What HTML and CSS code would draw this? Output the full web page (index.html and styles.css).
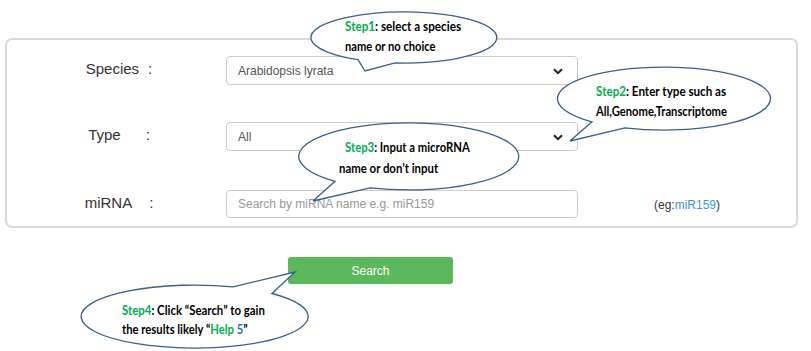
FILE: index.html
```html
<!DOCTYPE html>
<html>
<head>
<meta charset="utf-8">
<link rel="stylesheet" href="styles.css">
</head>
<body>
<div class="page">
  <div class="panel">
    <div class="row">
      <div class="label"><span>Species</span><span class="colon colon-sp">:</span></div>
      <div class="control select">
        <span class="value">Arabidopsis lyrata</span>
        <svg class="chev" width="10" height="7" viewBox="0 0 10 7"><path d="M1 1.2 L5 5.2 L9 1.2" fill="none" stroke="#222" stroke-width="2"/></svg>
      </div>
    </div>
    <div class="row row-type">
      <div class="label"><span>Type</span><span class="colon colon-ty">:</span></div>
      <div class="control select">
        <span class="value">All</span>
        <svg class="chev" width="10" height="7" viewBox="0 0 10 7"><path d="M1 1.2 L5 5.2 L9 1.2" fill="none" stroke="#222" stroke-width="2"/></svg>
      </div>
    </div>
    <div class="row row-mirna">
      <div class="label"><span>miRNA</span><span class="colon colon-mi">:</span></div>
      <div class="control input"><span class="placeholder">Search by miRNA name e.g. miR159</span></div>
      <div class="eg">(eg:<a class="eg-link">miR159</a>)</div>
    </div>
  </div>
  <div class="actions"><button class="search-btn">Search</button></div>

  <svg class="callouts" width="811" height="351" viewBox="0 0 811 351">
    <g class="bubble">
      <path d="M358 59.7 A93 25.5 0 1 1 395 62.9 L365 71 Z"/>
      <path d="M592 121.8 A106.5 31.5 0 1 1 625 127.9 L570 141 Z"/>
      <path d="M335 181.3 A110 33.5 0 1 1 370 187.8 L313 201 Z"/>
      <path d="M272 293.5 A113.5 31.5 0 1 1 233 286.9 L295 272 Z"/>
    </g>
    <g class="ctext">
      <text transform="translate(345 31) scale(0.899 1)"><tspan class="step">Step1</tspan>: select a species</text>
      <text transform="translate(345 51) scale(0.858 1)">name or no choice</text>
      <text transform="translate(596 96) scale(0.897 1)"><tspan class="step">Step2</tspan>: Enter type such as</text>
      <text transform="translate(596 116) scale(0.862 1)">All,Genome,Transcriptome</text>
      <text transform="translate(345 152) scale(0.871 1)"><tspan class="step">Step3</tspan>: Input a microRNA</text>
      <text transform="translate(339 173) scale(0.876 1)">name or don’t input</text>
      <text transform="translate(122 315) scale(0.879 1)"><tspan class="step">Step4</tspan>: Click “Search” to gain</text>
      <text transform="translate(122 334) scale(0.867 1)">the results likely “<tspan class="step">Help</tspan> <tspan class="num">5</tspan>”</text>
    </g>
  </svg>
</div>
</body>
</html>
```
FILE: styles.css
```css
* { box-sizing: border-box; }
html, body { margin: 0; padding: 0; background: #fff; }
body { font-family: "Liberation Sans", Arial, sans-serif; color: #333; }
.page { position: relative; width: 811px; height: 351px; overflow: hidden; }

.panel {
  margin: 38px 0 0 5px;
  width: 793px;
  height: 190px;
  border: 2px solid #dadada;
  border-radius: 7px;
  padding: 16px 0 0 0;
}
.row { display: flex; align-items: center; height: 29px; }
.row-type { margin-top: 37px; }
.row-mirna { margin-top: 39px; height: 28px; }

.label {
  width: 219px;
  padding-left: 5px;
  padding-bottom: 4px;
  text-align: center;
  font-size: 15px;
  color: #333;
}
.colon-sp { margin-left: 9px; }
.colon-ty { margin-left: 25px; }
.colon-mi { margin-left: 17px; }

.control {
  position: relative;
  width: 352px;
  height: 100%;
  border: 1px solid #ccc;
  border-radius: 4px;
  background: #fff;
  display: flex;
  align-items: center;
  padding-left: 11px;
  font-size: 12px;
}
.value { color: #555; }
.placeholder { color: #999; }
.chev { position: absolute; right: 14px; top: 11px; }

.eg { margin-left: 76px; font-size: 12px; color: #333; padding-top: 2px; }
.eg-link { color: #3a96dd; }

.actions { padding: 29px 0 0 288px; }
.search-btn {
  width: 165px;
  height: 27px;
  border: none;
  border-radius: 3px;
  background: #5cb85c;
  color: #fff;
  font-family: "Liberation Sans", Arial, sans-serif;
  font-size: 12px;
  padding: 0;
}

.callouts { position: absolute; left: 0; top: 0; pointer-events: none; }
.bubble path { fill: #fff; stroke: #3b5f8e; stroke-width: 1.3; stroke-linejoin: miter; }
.ctext text { font-family: Lato, "Open Sans", sans-serif; font-weight: 700; font-size: 13px; fill: #000; }
.ctext .step { fill: #00b050; }
.ctext .num { fill: #2e75b6; }
```
